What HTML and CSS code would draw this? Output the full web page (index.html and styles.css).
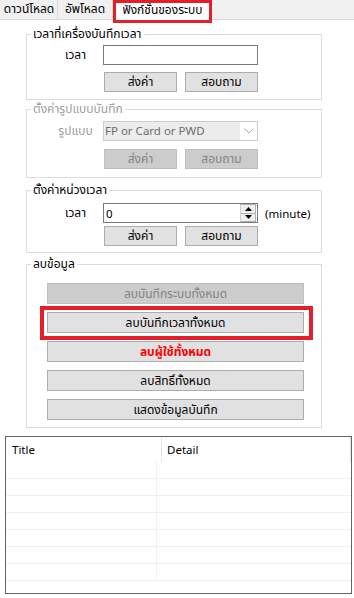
FILE: index.html
```html
<!DOCTYPE html>
<html lang="th">
<head>
    <meta charset="UTF-8">
    <meta name="viewport" content="width=device-width, initial-scale=1.0">
    <title>ฟังก์ชั่นของระบบ</title>
    <link rel="stylesheet" href="styles.css">
</head>
<body>
    <div class="tabs">
        <div class="tab tab-download">ดาวน์โหลด</div>
        <div class="tab tab-upload">อัพโหลด</div>
        <div class="tab active">ฟังก์ชั่นของระบบ</div>
    </div>

    <fieldset class="group g-clock">
        <legend>เวลาที่เครื่องบันทึกเวลา</legend>
        <div class="row">
            <div class="lbl">เวลา</div>
            <div class="field"></div>
        </div>
        <div class="btns">
            <button>ส่งค่า</button>
            <button>สอบถาม</button>
        </div>
    </fieldset>

    <fieldset class="group g-format disabled">
        <legend>ตั้งค่ารูปแบบบันทึก</legend>
        <div class="row">
            <div class="lbl">รูปแบบ</div>
            <div class="field select">
                <span class="select-text">FP or Card or PWD</span>
                <span class="chevron">
                    <svg width="10" height="6" viewBox="0 0 10 6"><path d="M0.5 0.5 L5 5 L9.5 0.5" fill="none" stroke="#a8a8a8" stroke-width="1"/></svg>
                </span>
            </div>
        </div>
        <div class="btns">
            <button disabled>ส่งค่า</button>
            <button disabled>สอบถาม</button>
        </div>
    </fieldset>

    <fieldset class="group g-delay">
        <legend>ตั้งค่าหน่วงเวลา</legend>
        <div class="row">
            <div class="lbl">เวลา</div>
            <div class="field number">
                <span class="num-text">0</span>
                <span class="spin">
                    <span class="spin-up"><svg width="7" height="4" viewBox="0 0 7 4"><path d="M0 4 L3.5 0 L7 4 Z" fill="#000"/></svg></span>
                    <span class="spin-down"><svg width="7" height="4" viewBox="0 0 7 4"><path d="M0 0 L3.5 4 L7 0 Z" fill="#000"/></svg></span>
                </span>
            </div>
            <div class="unit">(minute)</div>
        </div>
        <div class="btns">
            <button>ส่งค่า</button>
            <button>สอบถาม</button>
        </div>
    </fieldset>

    <fieldset class="group g-delete">
        <legend>ลบข้อมูล</legend>
        <button class="wide" disabled>ลบบันทึกระบบทั้งหมด</button>
        <div class="mark">
            <button class="wide">ลบบันทึกเวลาทั้งหมด</button>
        </div>
        <button class="wide danger">ลบผู้ใช้ทั้งหมด</button>
        <button class="wide">ลบสิทธิ์ทั้งหมด</button>
        <button class="wide">แสดงข้อมูลบันทึก</button>
    </fieldset>

    <div class="list">
        <div class="list-head">
            <div class="col-title">Title</div>
            <div class="col-detail">Detail</div>
        </div>
        <div class="list-row"><div class="c1"></div><div class="c2"></div></div>
        <div class="list-row"><div class="c1"></div><div class="c2"></div></div>
        <div class="list-row"><div class="c1"></div><div class="c2"></div></div>
        <div class="list-row"><div class="c1"></div><div class="c2"></div></div>
        <div class="list-row"><div class="c1"></div><div class="c2"></div></div>
        <div class="list-row"><div class="c1"></div><div class="c2"></div></div>
        <div class="list-row"><div class="c1"></div><div class="c2"></div></div>
    </div>
</body>
</html>
```

FILE: styles.css
```css
body {
    margin: 0;
    width: 354px;
    height: 598px;
    overflow: hidden;
    background-color: #fff;
    font-family: Tahoma, "Noto Sans Thai", "Noto Sans", "DejaVu Sans", sans-serif;
    font-size: 12px;
    color: #000;
}
.tabs {
    display: flex;
    height: 19px;
    padding-left: 1px;
    background-color: #f0f0f0;
    border-bottom: 1px solid #d9d9d9;
}
.tab {
    box-sizing: border-box;
    height: 19px;
    line-height: 19px;
    text-align: center;
    border-right: 1px solid #d9d9d9;
    white-space: nowrap;
}
.tab-download {
    width: 57px;
}
.tab-upload {
    width: 55px;
}
.tab.active {
    position: relative;
    z-index: 1;
    width: 99px;
    height: 23px;
    line-height: 15px;
    background-color: #fff;
    border: 3px solid #e3202a;
}
.group {
    box-sizing: border-box;
    width: 296px;
    min-width: 0;
    margin: 0 0 0 26px;
    padding: 0;
    border: 1px solid #dcdcdc;
}
.group legend {
    margin-left: 4px;
    padding: 0 2px;
    line-height: 14px;
    white-space: nowrap;
}
.g-clock {
    margin-top: 7px;
    padding-top: 4px;
    padding-bottom: 7px;
}
.g-format {
    margin-top: 2px;
    padding-top: 5px;
    padding-bottom: 8px;
}
.g-delay {
    margin-top: 5px;
    padding-top: 6px;
    padding-bottom: 6px;
}
.g-delay .btns {
    margin-top: 3px;
}
.g-delete {
    margin-top: 4px;
    padding-top: 12px;
    padding-bottom: 7px;
}
.disabled legend,
.disabled .lbl {
    color: #a0a0a0;
}
.row {
    display: flex;
    align-items: center;
    height: 20px;
}
.lbl {
    width: 55px;
    margin-left: 21px;
    text-align: center;
}
.field {
    box-sizing: border-box;
    width: 155px;
    height: 20px;
    border: 1px solid #7a7a7a;
    background-color: #fff;
}
.select {
    display: flex;
    align-items: center;
    border-color: #cccccc;
    font-family: "Noto Sans", "Open Sans", sans-serif;
    font-size: 11.5px;
    color: #6d6d6d;
}
.select-text {
    flex: 1;
    height: 18px;
    line-height: 18px;
    padding-left: 1px;
    background-color: #ececec;
}
.chevron {
    display: flex;
    justify-content: center;
    width: 17px;
}
.number {
    display: flex;
    align-items: center;
    font-family: "Noto Sans", "Open Sans", sans-serif;
    font-size: 11.5px;
}
.num-text {
    flex: 1;
    padding-left: 2px;
}
.spin {
    display: flex;
    flex-direction: column;
    width: 15px;
    height: 18px;
    margin-right: 1px;
    border-left: 1px solid #d0d0d0;
}
.spin-up,
.spin-down {
    display: flex;
    align-items: center;
    justify-content: center;
    height: 8px;
    background-color: #f0f0f0;
    border: 1px solid #b0b0b0;
    border-left: 0;
}
.spin-down {
    border-top: 0;
}
.unit {
    margin-left: 7px;
    font-family: "Noto Sans", "Open Sans", sans-serif;
    font-size: 11.5px;
}
.btns {
    display: flex;
    gap: 8px;
    margin: 7px 0 0 77px;
}
button {
    box-sizing: border-box;
    display: block;
    width: 73px;
    height: 20px;
    padding: 0;
    font-family: inherit;
    font-size: 12px;
    color: #000;
    background-color: #e1e1e1;
    border: 1px solid #adadad;
}
button:disabled {
    color: #838383;
    background-color: #cccccc;
    border-color: #bfbfbf;
}
.g-format .btns {
    margin-top: 8px;
}
button.wide {
    width: 257px;
    height: 21px;
    margin-left: 20px;
}
.mark {
    box-sizing: border-box;
    width: 273px;
    margin: 2px 0 0 13px;
    padding: 2px 5px 3px 3px;
    border: 4px solid #e3202a;
}
.mark button.wide {
    margin-left: 0;
}
.mark + button.wide {
    margin-top: 1px;
}
button.danger {
    color: #ff0000;
    font-weight: bold;
}
button.danger + button.wide,
button.danger + button.wide + button.wide {
    margin-top: 8px;
}
.list {
    box-sizing: border-box;
    width: 347px;
    height: 158px;
    margin: 8px 0 0 5px;
    border: 1px solid #646464;
    font-family: "Noto Sans", "Open Sans", sans-serif;
    font-size: 11.5px;
}
.list-head {
    display: flex;
    height: 25px;
}
.col-title {
    width: 149px;
    padding-left: 6px;
    line-height: 25px;
    border-right: 1px solid #e5e5e5;
}
.col-detail {
    width: 183px;
    padding-left: 5px;
    line-height: 25px;
    border-right: 1px solid #e5e5e5;
}
.list-row {
    display: flex;
    height: 16px;
    border-bottom: 1px solid #f0f0f0;
}
.c1 {
    width: 150px;
    border-right: 1px solid #f0f0f0;
}
.c2 {
    flex: 1;
}
```
